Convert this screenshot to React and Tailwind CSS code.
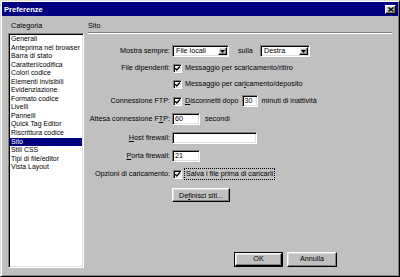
const raised =
  "bg-[#c0c0c0] border border-t-white border-l-white border-r-black border-b-black shadow-[inset_-1px_-1px_0_#808080,inset_1px_1px_0_#dfdfdf]";
const sunken =
  "bg-white border border-t-[#808080] border-l-[#808080] border-r-white border-b-white shadow-[inset_1px_1px_0_#000,inset_-1px_-1px_0_#dfdfdf]";

function Check() {
  return (
    <span className={`relative inline-block w-[9px] h-[9px] shrink-0 ${sunken}`}>
      <svg className="absolute left-0 top-0" width="7" height="7" viewBox="0 0 7 7">
        <path d="M1.2 3.2 L2.8 4.9 L5.9 1.6" stroke="black" strokeWidth="1.4" fill="none" />
      </svg>
    </span>
  );
}

function Select({ cls, value }) {
  return (
    <div className={`flex items-stretch h-[12px] p-[1px] ${sunken} ${cls}`}>
      <div className="flex-1 pl-[2px] leading-[8px]">{value}</div>
      <div className={`w-[9px] flex items-center justify-center ${raised}`}>
        <svg width="5" height="3" viewBox="0 0 5 3">
          <path d="M0 0 H5 L2.5 3 Z" fill="black" />
        </svg>
      </div>
    </div>
  );
}

function Input({ cls, value }) {
  return (
    <div className={`h-[12px] flex items-center px-[2px] leading-[8px] ${sunken} ${cls}`}>
      {value}
    </div>
  );
}

function Row({ cls, label, children }) {
  return (
    <div className={`flex items-center ${cls}`}>
      <div className="w-[82px] shrink-0 flex justify-end whitespace-nowrap">{label}</div>
      <div className="ml-[2px] flex items-center whitespace-nowrap">{children}</div>
    </div>
  );
}

const items = [
  "Generali",
  "Anteprima nel browser",
  "Barra di stato",
  "Caratteri/codifica",
  "Colori codice",
  "Elementi invisibili",
  "Evidenziazione",
  "Formato codice",
  "Livelli",
  "Pannelli",
  "Quick Tag Editor",
  "Riscrittura codice",
  "Sito",
  "Stili CSS",
  "Tipi di file/editor",
  "Vista Layout",
];

export default function App() {
  return (
    <div className="w-[400px] h-[277px] overflow-hidden bg-[#c0c0c0] font-['Liberation_Sans',Arial,sans-serif] text-[7.2px] text-black">
      <div className="w-[400px] h-[277px] flex flex-col p-[1px] bg-[#c0c0c0] border border-t-[#dfdfdf] border-l-[#dfdfdf] border-r-black border-b-black shadow-[inset_1px_1px_0_#fff,inset_-1px_-1px_0_#808080]">
        {/* title bar */}
        <div className="h-[14px] shrink-0 bg-[#000080] flex items-center justify-between pl-[2px] pr-[2px]">
          <span className="text-white font-bold text-[7.6px] leading-[9px]">Preferenze</span>
          <div className={`w-[11px] h-[9px] flex items-center justify-center ${raised}`}>
            <svg width="6" height="5" viewBox="0 0 6 5">
              <path d="M0.5 0.5 L5.5 4.5 M5.5 0.5 L0.5 4.5" stroke="black" strokeWidth="1.3" />
            </svg>
          </div>
        </div>

        {/* body */}
        <div className="flex flex-row flex-1 pt-[5px] pl-[6px]">
          {/* left column */}
          <div className="w-[76px] shrink-0 flex flex-col">
            <div className="h-[9px] leading-[9px] ml-[3px]">Categoria</div>
            <div className={`mt-[3px] h-[235px] ${sunken} p-[1px] text-[6.9px]`}>
              {items.map((it) => (
                <div
                  key={it}
                  className={`h-[8.55px] leading-[8.55px] pl-[1px] whitespace-nowrap overflow-hidden ${
                    it === "Sito" ? "bg-[#000080] text-white" : ""
                  }`}
                >
                  {it}
                </div>
              ))}
            </div>
          </div>

          {/* right column */}
          <div className="flex-1 flex flex-col ml-[4px] pr-[6px]">
            <div className="h-[9px] leading-[9px]">Sito</div>
            <div className="mt-[2px] h-[2px] border-y border-t-[#808080] border-b-white" />

            <Row cls="mt-[11px] h-[12px]" label="Mostra sempre:">
              <Select cls="w-[57px]" value="File locali" />
              <span className="ml-[9px] w-[22px]">sulla</span>
              <Select cls="w-[50px]" value="Destra" />
            </Row>

            <Row cls="mt-[6px] h-[10px]" label="File dipendenti:">
              <span className="ml-[1px] flex items-center">
                <Check />
              </span>
              <span className="ml-[3px]">Messaggio per scaricamento/ritiro</span>
            </Row>

            <Row cls="mt-[6px] h-[10px]" label="">
              <span className="ml-[1px] flex items-center">
                <Check />
              </span>
              <span className="ml-[3px]">
                Messaggio per car<u>i</u>camento/deposito
              </span>
            </Row>

            <Row cls="mt-[6px] h-[12px]" label="Connessione FTP:">
              <span className="ml-[1px] flex items-center">
                <Check />
              </span>
              <span className="ml-[3px]">
                <u>D</u>isconnetti dopo
              </span>
              <Input cls="ml-[3px] w-[16px]" value="30" />
              <span className="ml-[4px]">minuti di inattività</span>
            </Row>

            <Row
              cls="mt-[6px] h-[12px]"
              label={
                <span>
                  Attesa connessione F<u>T</u>P:
                </span>
              }
            >
              <Input cls="w-[28px]" value="60" />
              <span className="ml-[5px]">secondi</span>
            </Row>

            <Row
              cls="mt-[7px] h-[12px]"
              label={
                <span>
                  <u>H</u>ost firewall:
                </span>
              }
            >
              <Input cls="w-[85px]" value="" />
            </Row>

            <Row
              cls="mt-[6px] h-[12px]"
              label={
                <span>
                  <u>P</u>orta firewall:
                </span>
              }
            >
              <Input cls="w-[28px]" value="21" />
            </Row>

            <Row cls="mt-[6px] h-[12px]" label="Opzioni di caricamento:">
              <span className="ml-[1px] flex items-center">
                <Check />
              </span>
              <span className="ml-[2px] h-[12px] leading-[10px] px-[1px] border border-dotted border-black">
                Salva i file prima di caricarli
              </span>
            </Row>

            <Row cls="mt-[8px] h-[14px]" label="">
              <div className={`w-[58px] h-[14px] flex items-center justify-center leading-[9px] ${raised}`}>
                <span>
                  De<u>f</u>inisci siti...
                </span>
              </div>
            </Row>

            <div className="mt-[50px] ml-[146px] flex gap-[4px]">
              <div className="w-[49px] h-[15px] border border-black">
                <div className={`w-full h-full flex items-center justify-center ${raised}`}>OK</div>
              </div>
              <div className={`w-[50px] h-[15px] flex items-center justify-center ${raised}`}>Annulla</div>
            </div>
          </div>
        </div>
      </div>
    </div>
  );
}
